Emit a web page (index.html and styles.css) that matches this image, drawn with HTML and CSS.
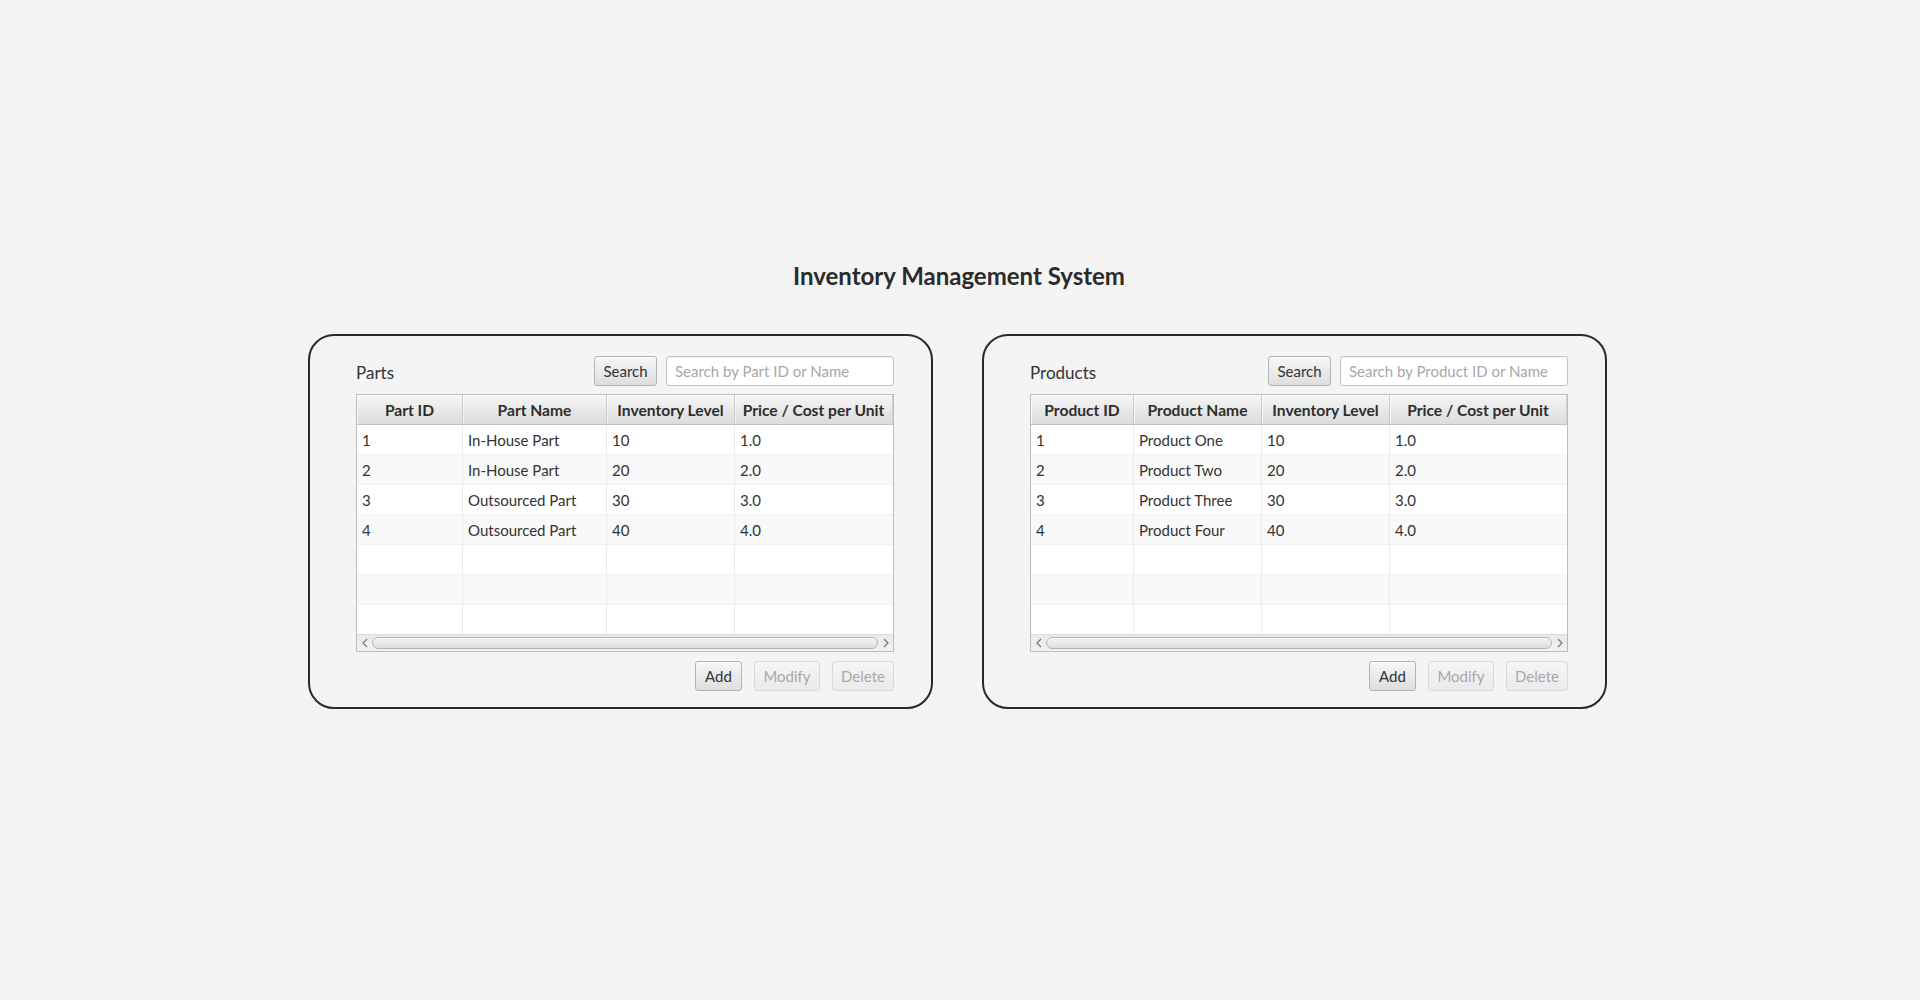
FILE: index.html
```html
<!DOCTYPE html>
<html lang="en">
<head>
<meta charset="utf-8">
<title>Inventory Management System</title>
<link rel="stylesheet" href="styles.css">
</head>
<body>
<div class="app">
  <h1 class="title">Inventory Management System</h1>
  <div class="panels">
    <section class="panel parts">
      <div class="panel-top">
        <span class="panel-label">Parts</span>
        <button class="btn btn-search">Search</button>
        <input class="search" type="text" placeholder="Search by Part ID or Name">
      </div>
      <div class="table-view">
        <table class="grid">
          <colgroup><col class="c1"><col class="c2"><col class="c3"><col class="c4"></colgroup>
          <thead>
            <tr><th>Part ID</th><th>Part Name</th><th>Inventory Level</th><th>Price / Cost per Unit</th></tr>
          </thead>
          <tbody>
            <tr><td>1</td><td>In-House Part</td><td>10</td><td>1.0</td></tr>
            <tr><td>2</td><td>In-House Part</td><td>20</td><td>2.0</td></tr>
            <tr><td>3</td><td>Outsourced Part</td><td>30</td><td>3.0</td></tr>
            <tr><td>4</td><td>Outsourced Part</td><td>40</td><td>4.0</td></tr>
            <tr><td></td><td></td><td></td><td></td></tr>
            <tr><td></td><td></td><td></td><td></td></tr>
            <tr><td></td><td></td><td></td><td></td></tr>
          </tbody>
        </table>
        <div class="hscroll">
          <span class="arrow"><svg width="8" height="10" viewBox="0 0 8 10"><path d="M6 1 L2 5 L6 9" fill="none" stroke="#777" stroke-width="1.2"/></svg></span>
          <span class="track"><span class="thumb"></span></span>
          <span class="arrow"><svg width="8" height="10" viewBox="0 0 8 10"><path d="M2 1 L6 5 L2 9" fill="none" stroke="#777" stroke-width="1.2"/></svg></span>
        </div>
      </div>
      <div class="actions">
        <button class="btn btn-add">Add</button>
        <button class="btn btn-modify" disabled>Modify</button>
        <button class="btn btn-delete" disabled>Delete</button>
      </div>
    </section>

    <section class="panel products">
      <div class="panel-top">
        <span class="panel-label">Products</span>
        <button class="btn btn-search">Search</button>
        <input class="search" type="text" placeholder="Search by Product ID or Name">
      </div>
      <div class="table-view">
        <table class="grid">
          <colgroup><col class="c1"><col class="c2"><col class="c3"><col class="c4"></colgroup>
          <thead>
            <tr><th>Product ID</th><th>Product Name</th><th>Inventory Level</th><th>Price / Cost per Unit</th></tr>
          </thead>
          <tbody>
            <tr><td>1</td><td>Product One</td><td>10</td><td>1.0</td></tr>
            <tr><td>2</td><td>Product Two</td><td>20</td><td>2.0</td></tr>
            <tr><td>3</td><td>Product Three</td><td>30</td><td>3.0</td></tr>
            <tr><td>4</td><td>Product Four</td><td>40</td><td>4.0</td></tr>
            <tr><td></td><td></td><td></td><td></td></tr>
            <tr><td></td><td></td><td></td><td></td></tr>
            <tr><td></td><td></td><td></td><td></td></tr>
          </tbody>
        </table>
        <div class="hscroll">
          <span class="arrow"><svg width="8" height="10" viewBox="0 0 8 10"><path d="M6 1 L2 5 L6 9" fill="none" stroke="#777" stroke-width="1.2"/></svg></span>
          <span class="track"><span class="thumb"></span></span>
          <span class="arrow"><svg width="8" height="10" viewBox="0 0 8 10"><path d="M2 1 L6 5 L2 9" fill="none" stroke="#777" stroke-width="1.2"/></svg></span>
        </div>
      </div>
      <div class="actions">
        <button class="btn btn-add">Add</button>
        <button class="btn btn-modify" disabled>Modify</button>
        <button class="btn btn-delete" disabled>Delete</button>
      </div>
    </section>
  </div>
</div>
</body>
</html>
```

FILE: styles.css
```css
* { box-sizing: border-box; }

html, body {
  margin: 0;
  padding: 0;
  background: #f4f4f4;
}

body {
  font-family: Lato, "Open Sans", "Liberation Sans", sans-serif;
  color: #333;
  width: 1920px;
  height: 1000px;
  overflow: hidden;
}

.app {
  display: flex;
  flex-direction: column;
  align-items: center;
  padding-top: 261px;
}

.title {
  margin: 0;
  font-size: 24px;
  line-height: 30px;
  font-weight: 700;
  color: #2b2b2b;
  padding-right: 2px;
}

.panels {
  display: flex;
  gap: 49px;
  margin-top: 43px;
  padding-right: 5px;
}

.panel {
  width: 625px;
  height: 375px;
  border: 2px solid #2a2a2a;
  border-radius: 26px;
  padding: 20px 37px 15px 46px;
  display: flex;
  flex-direction: column;
}

.panel-top {
  display: flex;
  align-items: center;
  height: 30px;
  gap: 9px;
}

.panel-label {
  flex: 1;
  font-size: 17px;
  font-weight: 400;
  color: #333;
  padding-top: 2px;
}

.btn {
  font-family: inherit;
  font-size: 15px;
  color: #333;
  height: 30px;
  padding: 0;
  border: 1px solid #b3b3b3;
  border-radius: 3px;
  background: linear-gradient(#f7f7f7, #dedede);
  box-shadow: inset 0 1px 0 rgba(255,255,255,0.7);
  cursor: default;
}

.btn:disabled {
  opacity: 0.4;
  color: #333;
}

.btn-search { width: 63px; }
.btn-add { width: 47px; }
.btn-modify { width: 66px; }
.btn-delete { width: 62px; }

.search {
  width: 228px;
  height: 30px;
  border: 1px solid #c4c4c4;
  border-radius: 3px;
  background: #fff;
  box-shadow: inset 0 1px 1px rgba(0,0,0,0.04);
  font-family: inherit;
  font-size: 15px;
  padding: 0 8px;
  color: #333;
  outline: none;
}

.search::placeholder { color: #a8a8a8; }

.table-view {
  margin-top: 8px;
  width: 538px;
  border: 1px solid #bdbdbd;
  background: #fff;
}

.grid {
  table-layout: fixed;
  width: 536px;
  border-collapse: separate;
  border-spacing: 0;
}

.parts .c1 { width: 106px; }
.parts .c2 { width: 144px; }
.parts .c3 { width: 128px; }
.parts .c4 { width: 158px; }

.products .c1 { width: 103px; }
.products .c2 { width: 128px; }
.products .c3 { width: 128px; }
.products .c4 { width: 177px; }

.grid th {
  height: 30px;
  padding: 0 1px;
  font-size: 15.6px;
  font-weight: 700;
  color: #2e2e2e;
  text-align: center;
  white-space: nowrap;
  overflow: hidden;
  background: linear-gradient(#f6f6f6, #dcdcdc);
  border-right: 1px solid #c9c9c9;
  border-bottom: 1px solid #c2c2c2;
  box-shadow: inset 1px 1px 0 rgba(255,255,255,0.6);
}

.grid th:last-child { border-right: 1px solid #d0d0d0; }

.grid td {
  height: 30px;
  padding: 0 5px;
  font-size: 15px;
  color: #333;
  white-space: nowrap;
  border-right: 1px solid #ebebeb;
  border-bottom: 1px solid #f1f1f1;
  background: #fff;
}

.grid td:last-child { border-right: none; }

.grid tbody tr:nth-child(even) td { background: #f9f9f9; }

.grid tbody tr:last-child td { height: 29px; border-bottom: none; }

.hscroll {
  display: flex;
  align-items: center;
  height: 17px;
  background: linear-gradient(#e9e9e9, #f2f2f2);
  border-top: 1px solid #dcdcdc;
}

.arrow {
  width: 15px;
  height: 16px;
  display: flex;
  align-items: center;
  justify-content: center;
}

.track {
  flex: 1;
  height: 16px;
  display: flex;
  align-items: center;
}

.thumb {
  flex: 1;
  height: 12px;
  border: 1px solid #b4b4b4;
  border-radius: 6px;
  background: linear-gradient(#f4f4f4, #dedede);
  box-shadow: inset 0 1px 0 rgba(255,255,255,0.8);
}

.actions {
  margin-top: 9px;
  display: flex;
  justify-content: flex-end;
  gap: 12px;
}
```
